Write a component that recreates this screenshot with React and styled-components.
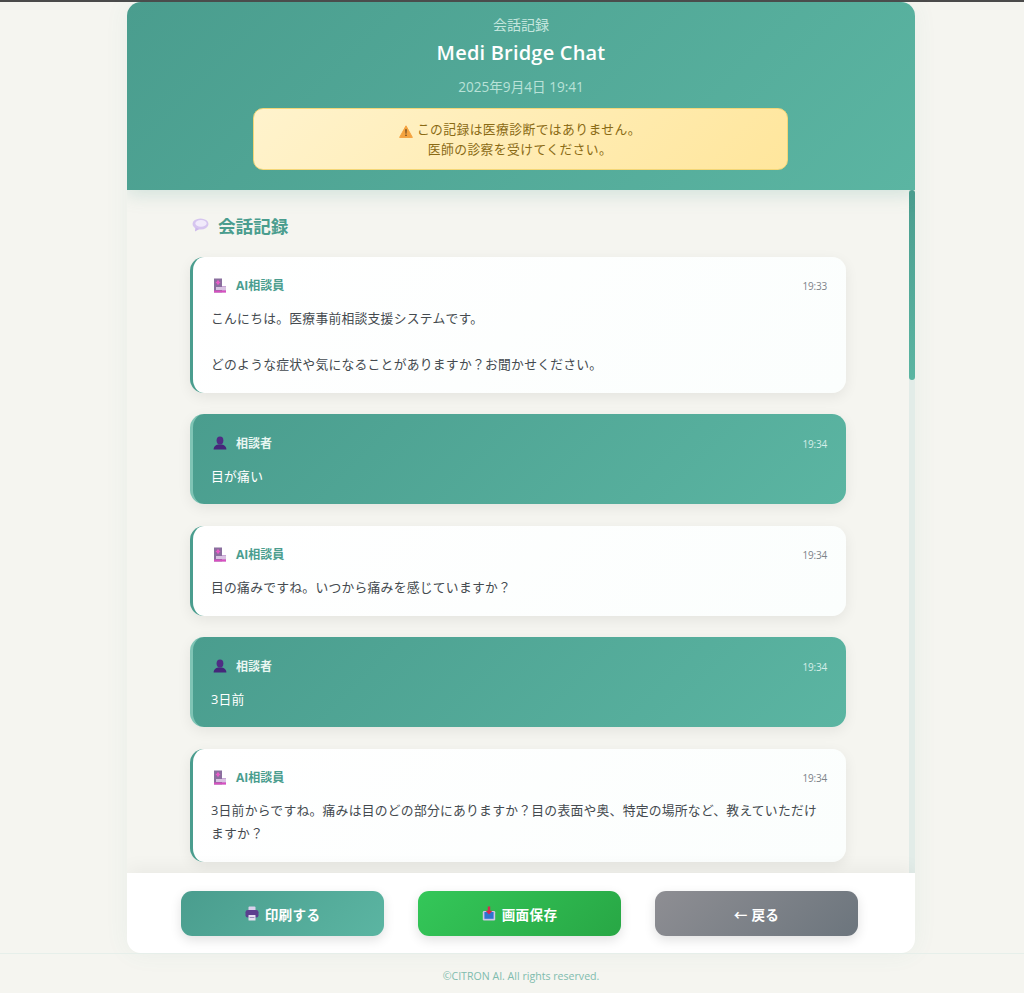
import React from 'react'
import styled, { createGlobalStyle } from 'styled-components'

const FONT = `"Open Sans", "Noto Sans CJK JP", sans-serif`

const messages = [
	{ role: 'ai', time: '19:33', text: 'こんにちは。医療事前相談支援システムです。\n\nどのような症状や気になることがありますか？お聞かせください。' },
	{ role: 'user', time: '19:34', text: '目が痛い' },
	{ role: 'ai', time: '19:34', text: '目の痛みですね。いつから痛みを感じていますか？' },
	{ role: 'user', time: '19:34', text: '3日前' },
	{ role: 'ai', time: '19:34', text: '3日前からですね。痛みは目のどの部分にありますか？目の表面や奥、特定の場所など、教えていただけますか？' }
]

const WarningIcon = () => (
	<svg width="14" height="13" viewBox="0 0 14 13">
		<path d="M7 .8 13.4 12.4H.6Z" fill="#f4a340" stroke="#f4a340" strokeLinejoin="round" />
		<path d="M6.3 4.2h1.4l-.3 4.6h-.8Z" fill="#5a3a1a" />
		<circle cx="7" cy="10.3" r=".8" fill="#5a3a1a" />
	</svg>
)

const BubbleIcon = () => (
	<svg width="17" height="14" viewBox="0 0 17 14">
		<ellipse cx="8.5" cy="6" rx="8" ry="5.6" fill="#d6c5ef" />
		<ellipse cx="9" cy="5.4" rx="5.6" ry="3.4" fill="#f1eafb" />
		<path d="M3.4 9.5 3 13.4 7.4 11Z" fill="#cdb8ec" />
	</svg>
)

const HospitalIcon = () => (
	<svg width="14" height="15" viewBox="0 0 14 15">
		<rect x="1" y="0.5" width="8" height="14" fill="#8a6f9e" />
		<rect x="9" y="8" width="4" height="6.5" fill="#c9a6d6" />
		<rect x="3" y="9" width="10" height="3" fill="#d9c3e2" />
		<rect x="1" y="12.5" width="12" height="2" fill="#d84fc0" />
		<path d="M4 2.5h2v1.2h1.2v1.6H6v1.2H4V5.3H2.8V3.7H4Z" fill="#e85ac8" />
	</svg>
)

const PersonIcon = () => (
	<svg width="14" height="14" viewBox="0 0 14 14">
		<ellipse cx="7" cy="4.4" rx="3.4" ry="4" fill="#4f2d84" />
		<path d="M.6 13.6c0-3.2 2.4-4.8 4.4-5.2h4c2 .4 4.4 2 4.4 5.2Z" fill="#45277a" />
	</svg>
)

const PrinterIcon = () => (
	<svg width="14" height="15" viewBox="0 0 14 15">
		<rect x="3.5" y="0.5" width="7" height="5" rx="1" fill="#d9d0ec" />
		<rect x="0.5" y="4" width="13" height="7.5" rx="2.2" fill="#5b3f8f" />
		<rect x="3.5" y="9" width="7" height="5.5" rx=".6" fill="#e6e0f2" />
		<rect x="4.6" y="11" width="4.8" height="1" fill="#9c8fc0" />
	</svg>
)

const SaveIcon = () => (
	<svg width="14" height="15" viewBox="0 0 14 15">
		<rect x="0.8" y="5" width="12.4" height="9.5" rx="1.2" fill="#cfc3e6" />
		<rect x="2.4" y="6" width="9.2" height="6.8" fill="#2f74d0" />
		<path d="M5.8 0.5h2.4v4.2h2.2L7 8.6 3.6 4.7h2.2Z" fill="#d8264f" />
	</svg>
)

const App = () => (
	<>
		<GlobalStyle />
		<TopEdge />
		<Page>
			<Card>
				<Header>
					<Eyebrow>会話記録</Eyebrow>
					<Title>Medi Bridge Chat</Title>
					<DateLine>2025年9月4日 19:41</DateLine>
					<Notice>
						<WarningIcon /> この記録は医療診断ではありません。
						<br />
						医師の診察を受けてください。
					</Notice>
				</Header>
				<Scroller>
					<Content>
						<SectionTitle>
							<BubbleIcon />
							<span>会話記録</span>
						</SectionTitle>
						{messages.map((message, index) => {
							const isUser = message.role === 'user'
							return (
								<Message key={index} $user={isUser}>
									<MessageHead>
										<Sender $user={isUser}>
											{isUser ? <PersonIcon /> : <HospitalIcon />}
											<span>{isUser ? '相談者' : 'AI相談員'}</span>
										</Sender>
										<Time $user={isUser}>{message.time}</Time>
									</MessageHead>
									<MessageText>{message.text}</MessageText>
								</Message>
							)
						})}
					</Content>
					<ScrollTrack>
						<ScrollThumb />
					</ScrollTrack>
				</Scroller>
				<Actions>
					<ActionButton $from="#4a9d8e" $to="#5bb5a2">
						<PrinterIcon />
						印刷する
					</ActionButton>
					<ActionButton $from="#34c759" $to="#28a745">
						<SaveIcon />
						画面保存
					</ActionButton>
					<ActionButton $from="#8e8e93" $to="#6c757d">
						← 戻る
					</ActionButton>
				</Actions>
			</Card>
			<Footer>©CITRON AI. All rights reserved.</Footer>
		</Page>
	</>
)

export default App

const GlobalStyle = createGlobalStyle`
	html,
	body {
		margin: 0;
		padding: 0;
		height: 100%;
		overflow: hidden;
		background: #f5f5f0;
		font-family: ${FONT};
	}
	* {
		box-sizing: border-box;
	}
`

const TopEdge = styled.div`
	height: 2px;
	background: #4b4b4b;
`

const Page = styled.div`
	height: 991px;
	display: flex;
	flex-direction: column;
	align-items: center;
`

const Card = styled.main`
	width: 788px;
	height: 951px;
	margin-left: 18px;
	display: flex;
	flex-direction: column;
	overflow: hidden;
	border-radius: 14px;
	background: #f5f5f0;
	box-shadow: 0 0 24px rgba(74, 157, 142, 0.07);
`

const Header = styled.header`
	position: relative;
	z-index: 2;
	height: 188px;
	flex: none;
	padding-top: 13px;
	display: flex;
	flex-direction: column;
	align-items: center;
	background: linear-gradient(135deg, #4a9d8e 0%, #5bb5a2 100%);
	box-shadow: 0 4px 18px rgba(74, 157, 142, 0.22);
	color: #fff;
`

const Eyebrow = styled.div`
	font-size: 14px;
	line-height: 19px;
	color: #c4e6de;
`

const Title = styled.h1`
	margin: 4px 0 0;
	font-size: 20px;
	line-height: 30px;
	font-weight: 600;
	letter-spacing: 0.2px;
	color: #fff;
`

const DateLine = styled.div`
	margin-top: 10px;
	font-size: 13.6px;
	line-height: 18px;
	color: #b9e2d8;
`

const Notice = styled.div`
	width: 535px;
	height: 62px;
	margin: 12px 2px 0 0;
	padding-top: 10px;
	border: 1px solid #f3d677;
	border-radius: 10px;
	background: linear-gradient(135deg, #fff3cd 0%, #ffe69c 100%);
	color: #8a6a14;
	font-size: 12.8px;
	letter-spacing: 0.4px;
	line-height: 20px;
	text-align: center;
	svg {
		vertical-align: text-bottom;
	}
`

const Scroller = styled.section`
	position: relative;
	flex: 1;
	min-height: 0;
	overflow: hidden;
`

const ScrollTrack = styled.div`
	position: absolute;
	top: 0;
	right: 0;
	bottom: 0;
	width: 6px;
	background: #e2ece8;
`

const ScrollThumb = styled.div`
	height: 190px;
	border-radius: 3px;
	background: linear-gradient(180deg, #4a9d8e, #5bb5a2);
`

const Content = styled.div`
	padding: 22px 69px 0 63px;
`

const SectionTitle = styled.h2`
	display: flex;
	align-items: center;
	gap: 9px;
	height: 26px;
	margin: 0 0 18.5px 2px;
	font-size: 17.6px;
	font-weight: 700;
	color: #4a9d8e;
`

const Message = styled.article`
	margin-bottom: 21.5px;
	padding: 16.5px 19px 16.5px 18px;
	border-left: 3px solid ${props => (props.$user ? '#7fc4b5' : '#4a9d8e')};
	border-radius: 14px;
	background: ${props =>
		props.$user
			? 'linear-gradient(135deg, #4a9d8e 0%, #5bb5a2 100%)'
			: 'linear-gradient(135deg, #ffffff 0%, #fbfefd 100%)'};
	color: ${props => (props.$user ? '#fff' : '#444a4f')};
	box-shadow: 0 4px 14px rgba(0, 0, 0, 0.07);
`

const MessageHead = styled.div`
	display: flex;
	align-items: center;
	justify-content: space-between;
	height: 24px;
	margin-bottom: 10px;
`

const Sender = styled.div`
	display: flex;
	align-items: center;
	gap: 9px;
	padding-left: 2px;
	font-size: 12px;
	font-weight: 700;
	color: ${props => (props.$user ? '#e8f6f2' : '#4a9d8e')};
`

const Time = styled.time`
	padding-top: 2px;
	font-size: 10px;
	letter-spacing: -0.2px;
	color: ${props => (props.$user ? '#d5eee8' : '#7d8389')};
`

const MessageText = styled.p`
	margin: 0;
	font-size: 12.8px;
	letter-spacing: 0.25px;
	line-height: 23px;
	white-space: pre-line;
`

const Actions = styled.div`
	position: relative;
	z-index: 2;
	height: 80px;
	flex: none;
	display: flex;
	justify-content: center;
	gap: 34px;
	padding: 18px 3px 0 0;
	background: #fff;
	box-shadow: 0 -4px 18px rgba(0, 0, 0, 0.05);
`

const ActionButton = styled.button`
	width: 203px;
	height: 45px;
	display: flex;
	align-items: center;
	justify-content: center;
	gap: 6px;
	border: 0;
	border-radius: 11px;
	background: linear-gradient(135deg, ${props => props.$from} 0%, ${props => props.$to} 100%);
	box-shadow: 0 4px 12px rgba(0, 0, 0, 0.12);
	color: #fff;
	font-family: ${FONT};
	font-size: 13.6px;
	font-weight: 700;
	letter-spacing: 0.3px;
`

const Footer = styled.footer`
	width: 100%;
	height: 40px;
	padding: 4px 0 0 18px;
	display: flex;
	align-items: center;
	justify-content: center;
	border-top: 1px solid #e6efea;
	color: #7fbcae;
	font-size: 10.6px;
	font-weight: 400;
`
